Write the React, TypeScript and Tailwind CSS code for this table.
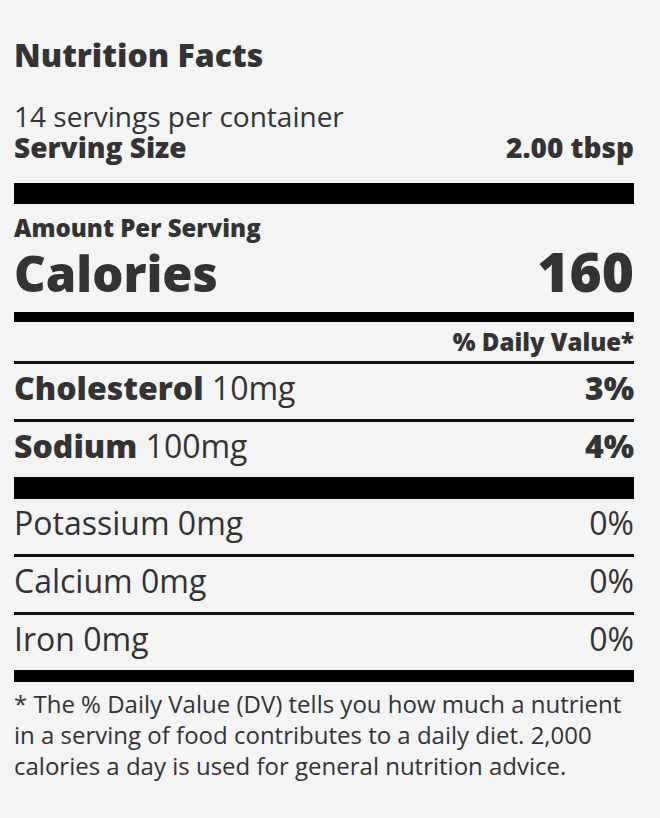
const majors = [
  { name: "Cholesterol", amount: "10mg", dv: "3%" },
  { name: "Sodium", amount: "100mg", dv: "4%" },
];

const minors = [
  { name: "Potassium", amount: "0mg", dv: "0%" },
  { name: "Calcium", amount: "0mg", dv: "0%" },
  { name: "Iron", amount: "0mg", dv: "0%" },
];

export default function App() {
  return (
    <div className="min-h-screen w-full bg-[#f4f4f4] font-['Open_Sans',sans-serif] text-[#333]">
      <div className="w-[660px] h-[818px] pl-[14px] pr-[26px] pt-[35px]">
        {/* Header */}
        <h1 className="h-[40px] text-[32px] leading-[40px] font-extrabold">Nutrition Facts</h1>
        <p className="mt-[27px] h-[28px] text-[28px] leading-[28px]">14 servings per container</p>
        <div className="flex h-[34px] justify-between text-[28px] leading-[34px] font-extrabold">
          <span>Serving Size</span>
          <span>2.00 tbsp</span>
        </div>
        <div className="mt-[19px] h-[21px] bg-black" />

        {/* Calories */}
        <p className="mt-[10px] h-[28px] text-[24px] leading-[28px] font-extrabold">Amount Per Serving</p>
        <div className="mt-[1px] flex items-baseline justify-between font-extrabold leading-none">
          <span className="text-[49px]">Calories</span>
          <span className="text-[55px]">160</span>
        </div>
        <div className="mt-[14px] h-[10px] bg-black" />
        <p className="h-[39px] text-right text-[24px] leading-[39px] font-extrabold">% Daily Value*</p>

        {/* Nutrients */}
        {majors.map((row) => (
          <div key={row.name}>
            <div className="h-[3px] bg-[#111]" />
            <div className="flex h-[55px] justify-between text-[32px] leading-[48px]">
              <span>
                <span className="font-extrabold">{row.name}</span> {row.amount}
              </span>
              <span className="font-extrabold">{row.dv}</span>
            </div>
          </div>
        ))}
        <div className="h-[22px] bg-black" />
        {minors.map((row, i) => (
          <div key={row.name}>
            {i > 0 && <div className="h-[3px] bg-[#111]" />}
            <div className="flex h-[55px] justify-between text-[32px] leading-[48px]">
              <span>
                {row.name} {row.amount}
              </span>
              <span>{row.dv}</span>
            </div>
          </div>
        ))}
        <div className="h-[12px] bg-black" />

        {/* Footnote */}
        <p className="mt-[6px] text-[24px] leading-[31px]">
          * The % Daily Value (DV) tells you how much a nutrient in a serving of food contributes to a daily diet. 2,000
          calories a day is used for general nutrition advice.
        </p>
      </div>
    </div>
  );
}
